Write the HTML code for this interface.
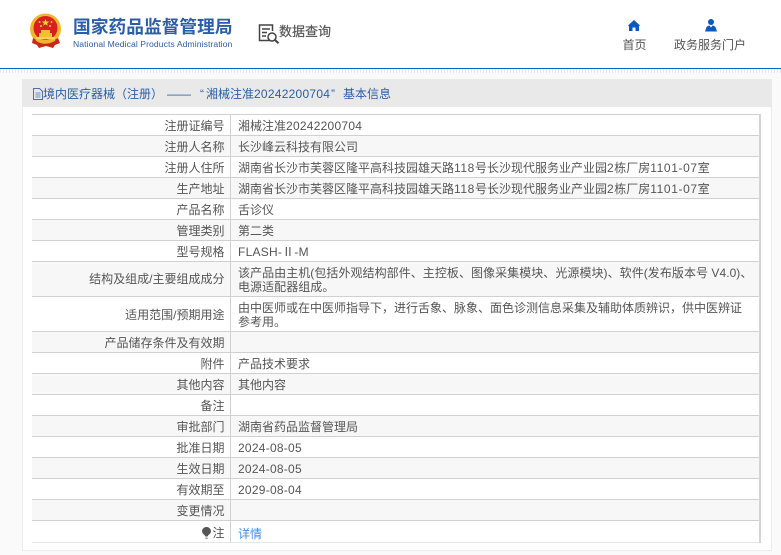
<!DOCTYPE html>
<html lang="zh"><head><meta charset="utf-8"><style>
*{box-sizing:border-box}
html,body{margin:0;padding:0}
body{width:781px;height:555px;position:relative;overflow:hidden;background:#fafafa;font-family:"Liberation Sans","Noto Sans CJK SC",sans-serif;font-size:12px;color:#555}
#w{position:absolute;left:0;top:0;width:781px;height:555px;filter:blur(.3px)}
.a{position:absolute;white-space:nowrap}
#hd{left:0;top:0;width:781px;height:68px;background:#fff}
#bl{left:0;top:68px;width:781px;height:1.4px;background:#0a66c8}
#dt{left:0;top:69px;width:781px;height:4px;background:repeating-linear-gradient(90deg,#e6e6e6 0 1px,#fafafa 1px 3px)}
#pn{left:22px;top:79px;width:750px;height:472px;background:#fff;border:1px solid #ececec;border-top:0}
#ph{left:22px;top:79px;width:750px;height:28px;background:#e9e9e9}
#tb{left:32px;top:114px;width:729px}
.r{position:absolute;left:0;width:729px;border-top:1.3px solid #d0d0d0}
.r.g{background:#f7f7f7}
.l{position:absolute;right:536.5px;top:1px;text-align:right;white-space:nowrap;color:#555;line-height:20px}
.v{position:absolute;left:206px;top:1px;width:520px;color:#555;line-height:20px;white-space:nowrap}
.d{left:230px;top:114px;width:1.2px;height:429px;background:#d0d0d0}
.e{left:759px;top:114px;width:2px;height:429px;background:#d4d4d4}
.n{letter-spacing:.25px}
.m{letter-spacing:.6px}
.h{top:85px;line-height:18px;color:#2a5ea8;font-family:"Noto Sans CJK SC",sans-serif}
.hl{font-family:"Liberation Sans",sans-serif}
</style></head><body><div id="w">
<div class="a" id="hd"></div><div class="a" id="bl"></div><div class="a" id="dt"></div>
<svg class="a" style="left:29px;top:13px" width="34" height="36" viewBox="0 0 34 36">
<circle cx="16.500" cy="16" r="15.500" fill="#f3b62b"/>
<circle cx="16.500" cy="15" r="12" fill="#d8201e"/>
<path d="M4 25q12 9 25 0l2 5-5 2-2 3-7-2-7 2-2-3-5-2z" fill="#c9261d"/>
<path d="M7 27q9 6 19 0" stroke="#f3b62b" stroke-width="1.500" fill="none"/>
<path d="M10 20h13v4H10zM12 17h9v3h-9z" fill="#f3c12f"/>
<path d="M7 24h19v2.200H7z" fill="#f6d35b"/>
<path d="M16.500 6l1 2.500 2.600.1-2 1.600.7 2.500-2.300-1.400-2.300 1.400.7-2.500-2-1.600 2.600-.1z" fill="#f6cf3f"/>
<circle cx="10.500" cy="9" r="1" fill="#f6cf3f"/><circle cx="12" cy="13" r="1" fill="#f6cf3f"/><circle cx="22.500" cy="9" r="1" fill="#f6cf3f"/><circle cx="21" cy="13" r="1" fill="#f6cf3f"/>
</svg>
<div class="a" style="left:73px;top:16px;font-size:17.7px;font-weight:700;color:#2a5ea8;line-height:22px;letter-spacing:.05px">国家药品监督管理局</div>
<div class="a" style="left:73px;top:38px;font-size:8.6px;color:#2a5ea8;line-height:13px;letter-spacing:.08px">National Medical Products Administration</div>
<svg class="a" style="left:258px;top:23px" width="22" height="22" viewBox="0 0 22 22" fill="none" stroke="#444" stroke-width="1.500">
<path d="M12.500 17.500H1.500V2h13v6"/><path d="M4 6h8M4 9.500h5M4 13h4"/><circle cx="14" cy="14" r="4"/><path d="M17 17l3.500 3.200" stroke-width="2"/>
</svg>
<div class="a" style="left:279px;top:22px;font-size:13px;line-height:20px;color:#555;-webkit-text-stroke:.2px #555">数据查询</div>
<svg class="a" style="left:628px;top:20px" width="12" height="11" viewBox="0 0 12 11"><path d="M6 0L0 5.500l1 .8V11h3.500V7.500h3V11H11V6.300l1-.8z" fill="#0a58c0"/></svg>
<div class="a" style="left:622.500px;top:36px;font-size:12px;line-height:18px">首页</div>
<svg class="a" style="left:705px;top:19px" width="12" height="13" viewBox="0 0 12 13"><circle cx="6" cy="3" r="3" fill="#0a58c0"/><path d="M0 12.500L1.500 8Q3 6.500 4.500 6.500L6 8.500 7.500 6.500Q9 6.500 10.500 8L12 12.500z" fill="#0a58c0"/></svg>
<div class="a" style="left:674px;top:36px;font-size:12px;line-height:18px">政务服务门户</div>
<div class="a" id="pn"></div><div class="a" id="ph"></div>
<svg class="a" style="left:33px;top:88px" width="10" height="12" viewBox="0 0 10 12" fill="none" stroke="#4a6fb0"><path d="M.5.500h6l3 3v8h-9z"/><path d="M2.500 5h5M2.500 7h5M2.500 9h5" stroke-width=".8"/></svg>
<div class="a h" style="left:43px">境内医疗器械（注册）</div>
<div class="a h hl" style="left:167px;width:26px;overflow:hidden">——</div>
<div class="a h hl" style="left:200px">“</div>
<div class="a h" style="left:206px">湘械注准</div>
<div class="a h hl" style="left:254px;letter-spacing:.25px">20242200704</div>
<div class="a h hl" style="left:331px">”</div>
<div class="a h" style="left:343px">基本信息</div>
<div class="a" id="tb">
<div class="r" style="top:0;height:21px"><div class="l">注册证编号</div><div class="v">湘械注准<span class="n">20242200704</span></div></div>
<div class="r g" style="top:21px;height:21px"><div class="l">注册人名称</div><div class="v">长沙峰云科技有限公司</div></div>
<div class="r" style="top:42px;height:21px"><div class="l">注册人住所</div><div class="v">湖南省长沙市芙蓉区隆平高科技园雄天路<span class="m">118</span>号长沙现代服务业产业园<span class="m">2</span>栋厂房<span class="m">1101-07</span>室</div></div>
<div class="r g" style="top:63px;height:21px"><div class="l">生产地址</div><div class="v">湖南省长沙市芙蓉区隆平高科技园雄天路<span class="m">118</span>号长沙现代服务业产业园<span class="m">2</span>栋厂房<span class="m">1101-07</span>室</div></div>
<div class="r" style="top:84px;height:21px"><div class="l">产品名称</div><div class="v">舌诊仪</div></div>
<div class="r g" style="top:105px;height:21px"><div class="l">管理类别</div><div class="v">第二类</div></div>
<div class="r" style="top:126px;height:21px"><div class="l">型号规格</div><div class="v"><span class="n">FLASH-Ⅱ-M</span></div></div>
<div class="r g" style="top:147px;height:35px"><div class="l" style="top:7px">结构及组成/主要组成成分</div><div class="v" style="line-height:14px;top:4px;letter-spacing:.05px">该产品由主机(包括外观结构部件、主控板、图像采集模块、光源模块)、软件(发布版本号 V4.0)、<br>电源适配器组成。</div></div>
<div class="r" style="top:182px;height:35px"><div class="l" style="top:8px">适用范围/预期用途</div><div class="v" style="line-height:14px;top:4px">由中医师或在中医师指导下，进行舌象、脉象、面色诊测信息采集及辅助体质辨识，供中医辨证<br>参考用。</div></div>
<div class="r g" style="top:217px;height:21px"><div class="l">产品储存条件及有效期</div></div>
<div class="r" style="top:238px;height:21px"><div class="l">附件</div><div class="v">产品技术要求</div></div>
<div class="r g" style="top:259px;height:21px"><div class="l">其他内容</div><div class="v">其他内容</div></div>
<div class="r" style="top:280px;height:21px"><div class="l">备注</div></div>
<div class="r g" style="top:301px;height:21px"><div class="l">审批部门</div><div class="v">湖南省药品监督管理局</div></div>
<div class="r" style="top:322px;height:21px"><div class="l">批准日期</div><div class="v n">2024-08-05</div></div>
<div class="r g" style="top:343px;height:21px"><div class="l">生效日期</div><div class="v n">2024-08-05</div></div>
<div class="r" style="top:364px;height:21px"><div class="l">有效期至</div><div class="v n">2029-08-04</div></div>
<div class="r g" style="top:385px;height:21px"><div class="l">变更情况</div></div>
<div class="r" style="top:406px;height:23px;border-bottom:1px solid #e6e6e6"><div class="l" style="top:2px">注</div><div class="v" style="top:3px;color:#3f8fe8">详情</div></div>
</div>
<div class="a d"></div><div class="a e"></div>
<svg class="a" style="left:202px;top:527px" width="9" height="13" viewBox="0 0 9 13"><path d="M4.500 0a4.200 4.200 0 0 1 2 8L5.500 9.500h-2L2.500 8a4.200 4.200 0 0 1 2-8z" fill="#555"/><path d="M3.300 10.500h2.400v1.500H3.300z" fill="#999"/></svg>
</div></body></html>
